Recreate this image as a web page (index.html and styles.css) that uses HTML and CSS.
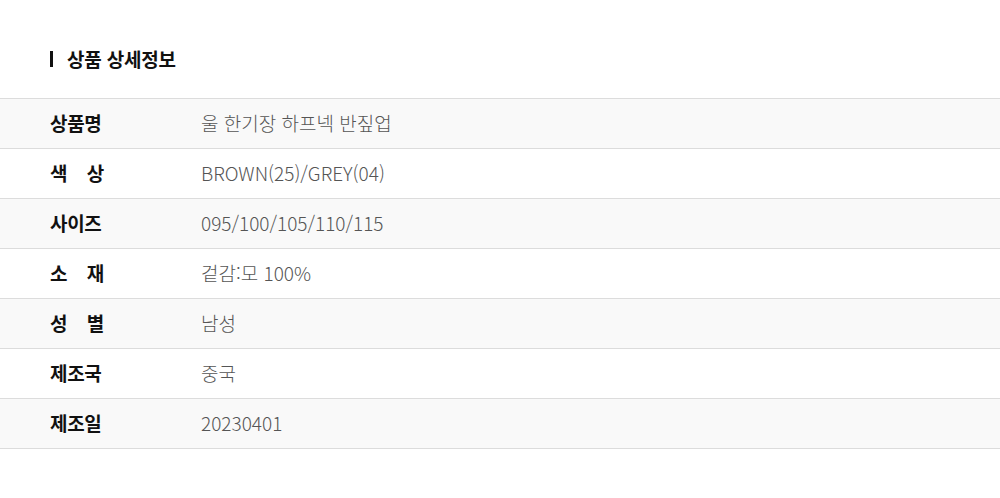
FILE: index.html
```html
<!DOCTYPE html>
<html lang="ko">
<head>
<meta charset="utf-8">
<link rel="stylesheet" href="styles.css">
</head>
<body>
<div class="page">
  <h2 class="title">상품 상세정보</h2>
  <div class="table">
    <div class="row odd"><div class="label"><span class="lbl">상품명</span></div><div class="value">울 한기장 하프넥 반짚업</div></div>
    <div class="row"><div class="label"><span class="lbl just">색 상</span></div><div class="value">BROWN(25)/GREY(04)</div></div>
    <div class="row odd"><div class="label"><span class="lbl">사이즈</span></div><div class="value">095/100/105/110/115</div></div>
    <div class="row"><div class="label"><span class="lbl just">소 재</span></div><div class="value">겉감:모 100%</div></div>
    <div class="row odd"><div class="label"><span class="lbl just">성 별</span></div><div class="value">남성</div></div>
    <div class="row"><div class="label"><span class="lbl">제조국</span></div><div class="value">중국</div></div>
    <div class="row odd"><div class="label"><span class="lbl">제조일</span></div><div class="value">20230401</div></div>
  </div>
</div>
</body>
</html>
```
FILE: styles.css
```css
html, body {
  margin: 0;
  padding: 0;
  background: #fff;
}
body {
  font-family: "Noto Sans CJK KR", "Noto Sans", sans-serif;
  color: #111;
}
.page {
  padding-top: 51px;
}
.title {
  margin: 0 0 31px 50px;
  display: flex;
  align-items: center;
  font-size: 19px;
  font-weight: 700;
  color: #111;
  letter-spacing: -0.2px;
  border-left: 3px solid #111;
  padding-left: 14px;
  line-height: 16px;
  height: 16px;
}
.table {
  border-top: 1px solid #dcdcdc;
}
.row {
  display: flex;
  align-items: center;
  height: 49px;
  box-sizing: border-box;
  height: 50px;
  padding-bottom: 3px;
  border-bottom: 1px solid #dcdcdc;
  background: #fff;
}
.row.odd {
  background: #f9f9f9;
}
.label {
  width: 151px;
  padding-left: 50px;
  box-sizing: content-box;
  flex: none;
  font-size: 19px;
  font-weight: 700;
  color: #111;
}
.lbl {
  display: inline-block;
  width: 54px;
  letter-spacing: -0.3px;
}
.lbl.just {
  text-align: justify;
  text-align-last: justify;
}
.value {
  font-size: 19px;
  font-weight: 300;
  color: #555;
  letter-spacing: 0;
}
```
